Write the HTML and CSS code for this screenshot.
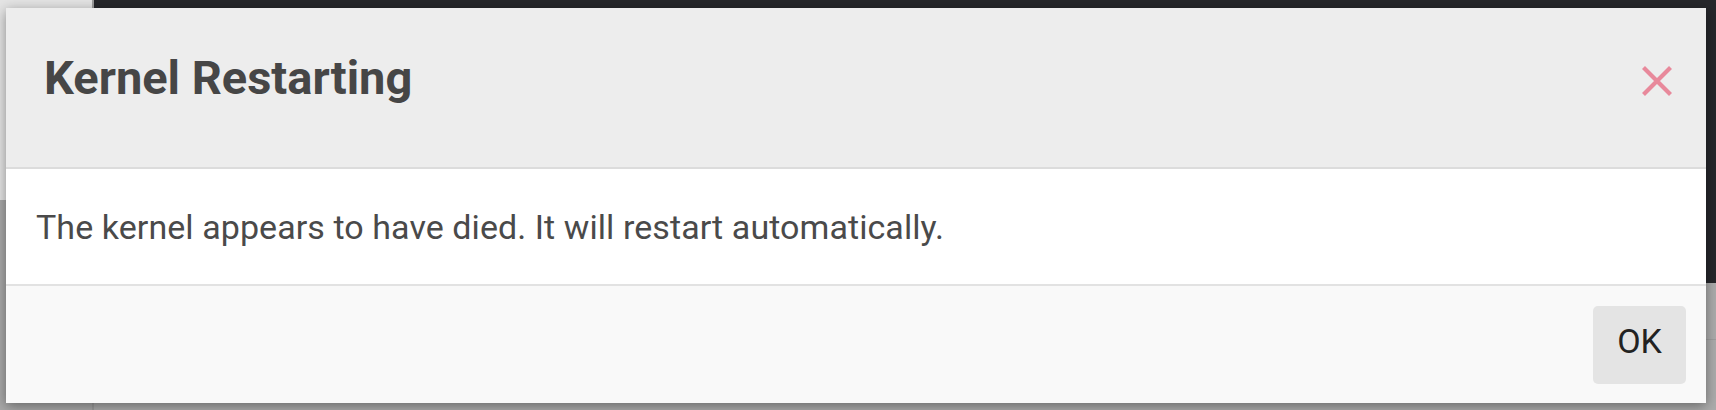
FILE: index.html
```html
<!DOCTYPE html>
<html lang="en">
<head>
    <meta charset="UTF-8">
    <meta name="viewport" content="width=device-width, initial-scale=1.0">
    <title>Kernel Restarting</title>
    <link rel="stylesheet" href="styles.css">
</head>
<body>
    <div class="page">
        <div class="sidebar">
            <div class="sidebar-top"></div>
        </div>
        <div class="main">
            <div class="editor"></div>
            <div class="output"></div>
        </div>
    </div>

    <div class="modal">
        <div class="modal-header">
            <h1 class="modal-title">Kernel Restarting</h1>
            <button class="close-button" aria-label="Close">
                <svg width="30" height="30" viewBox="0 0 30 30">
                    <path d="M1.5 1.5 L28.5 28.5 M28.5 1.5 L1.5 28.5" stroke="#e8899b" stroke-width="4.2" fill="none"/>
                </svg>
            </button>
        </div>
        <div class="modal-body">
            <p>The kernel appears to have died. It will restart automatically.</p>
        </div>
        <div class="modal-footer">
            <button class="ok-button">OK</button>
        </div>
    </div>
</body>
</html>
```

FILE: styles.css
```css
body {
    margin: 0;
    height: 410px;
    overflow: hidden;
    background-color: #acacac;
    font-family: 'Roboto', 'Liberation Sans', sans-serif;
}
.page {
    display: grid;
    grid-template-columns: 94px 1fr;
    height: 410px;
}
.sidebar {
    background-color: #a9a9a9;
    border-right: 2px solid #9c9c9c;
}
.sidebar-top {
    height: 200px;
    background-color: #e4e4e4;
}
.editor {
    height: 283px;
    background-color: #26272b;
}
.output {
    height: 56px;
    border-bottom: 1px solid #9e9e9e;
}
.modal {
    position: absolute;
    top: 8px;
    left: 6px;
    width: 1700px;
    background-color: #ffffff;
    box-shadow: 0 3px 12px rgba(0, 0, 0, 0.4);
}
.modal-header {
    display: flex;
    justify-content: space-between;
    align-items: flex-start;
    padding: 47px 34px 66px 38px;
    background-color: #ededed;
    border-bottom: 2px solid #dcdcdc;
}
.modal-title {
    margin: 0;
    font-size: 47px;
    line-height: 46px;
    font-weight: 700;
    color: #464646;
}
.close-button {
    display: block;
    margin-top: 11px;
    padding: 0;
    border: none;
    background: none;
    cursor: pointer;
}
.close-button svg {
    display: block;
}
.modal-body {
    padding: 41px 30px 40px;
    border-bottom: 2px solid #e2e2e2;
}
.modal-body p {
    margin: 0;
    font-size: 34px;
    line-height: 34px;
    letter-spacing: 0.07px;
    color: #4a4a4a;
}
.modal-footer {
    display: flex;
    justify-content: flex-end;
    padding: 20px 20px 19px;
    background-color: #f9f9f9;
}
.ok-button {
    width: 93px;
    height: 78px;
    padding: 0 0 8px;
    border: none;
    border-radius: 5px;
    background-color: #e4e4e4;
    font-family: 'Roboto', 'Liberation Sans', sans-serif;
    font-size: 34px;
    line-height: 70px;
    color: #222222;
    cursor: pointer;
}
```
